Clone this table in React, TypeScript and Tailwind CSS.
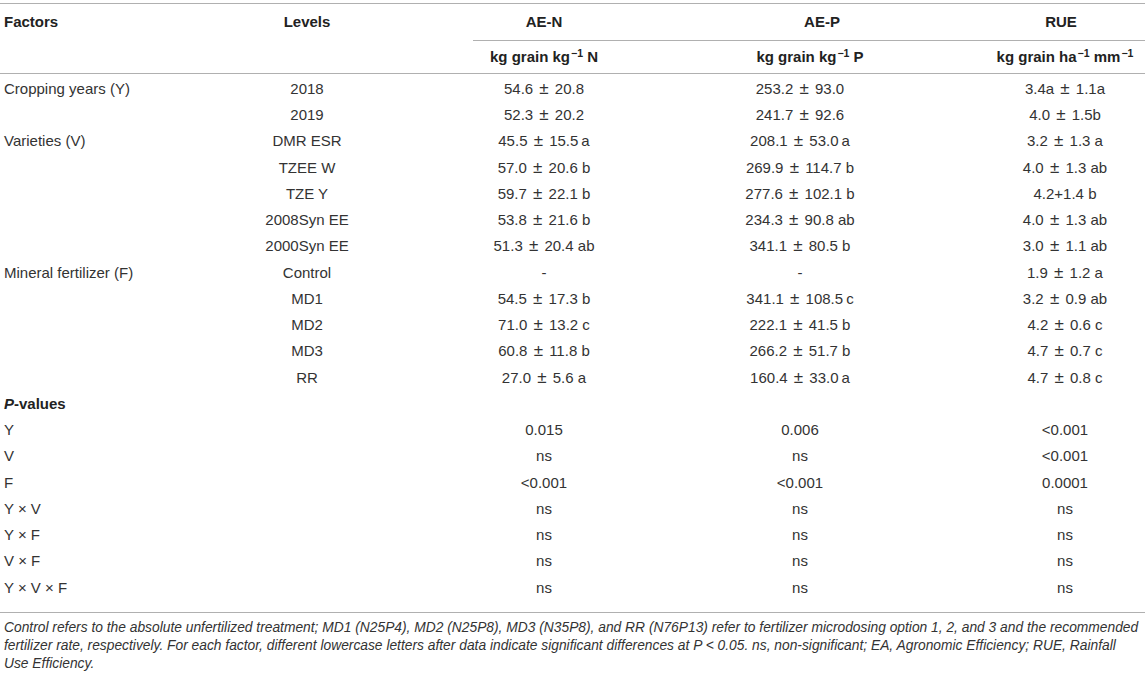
const COLS = 'grid grid-cols-[200px_214px_59px_142px_370px_160px]'

// The source sets ± a size larger than the figures around it.
function pm(a: string, b: string) {
  return (
    <span>
      {a} <span className="mx-[2px] text-[17px] leading-none">±</span> {b}
    </span>
  )
}

type Row = [string, string, React.ReactNode, React.ReactNode, React.ReactNode]

const DATA: Row[] = [
  ['Cropping years (Y)', '2018', pm('54.6', '20.8'), pm('253.2', '93.0'), pm('3.4a', '1.1a')],
  ['', '2019', pm('52.3', '20.2'), pm('241.7', '92.6'), pm('4.0', '1.5b')],
  ['Varieties (V)', 'DMR ESR', pm('45.5', '15.5\u2009a'), pm('208.1', '53.0\u2009a'), pm('3.2', '1.3 a')],
  ['', 'TZEE W', pm('57.0', '20.6 b'), pm('269.9', '114.7 b'), pm('4.0', '1.3 ab')],
  ['', 'TZE Y', pm('59.7', '22.1 b'), pm('277.6', '102.1 b'), '4.2+1.4 b'],
  ['', '2008Syn EE', pm('53.8', '21.6 b'), pm('234.3', '90.8 ab'), pm('4.0', '1.3 ab')],
  ['', '2000Syn EE', pm('51.3', '20.4 ab'), pm('341.1', '80.5 b'), pm('3.0', '1.1 ab')],
  ['Mineral fertilizer (F)', 'Control', '-', '-', pm('1.9', '1.2 a')],
  ['', 'MD1', pm('54.5', '17.3 b'), pm('341.1', '108.5\u2009c'), pm('3.2', '0.9 ab')],
  ['', 'MD2', pm('71.0', '13.2 c'), pm('222.1', '41.5 b'), pm('4.2', '0.6 c')],
  ['', 'MD3', pm('60.8', '11.8 b'), pm('266.2', '51.7 b'), pm('4.7', '0.7 c')],
  ['', 'RR', pm('27.0', '5.6 a'), pm('160.4', '33.0\u2009a'), pm('4.7', '0.8 c')],
]

const PVALUES: Row[] = [
  ['Y', '', '0.015', '0.006', '<0.001'],
  ['V', '', 'ns', 'ns', '<0.001'],
  ['F', '', '<0.001', '<0.001', '0.0001'],
  ['Y × V', '', 'ns', 'ns', 'ns'],
  ['Y × F', '', 'ns', 'ns', 'ns'],
  ['V × F', '', 'ns', 'ns', 'ns'],
  ['Y × V × F', '', 'ns', 'ns', 'ns'],
]

function Cell({ children, className = '' }: { children?: React.ReactNode; className?: string }) {
  return <div className={`flex items-center justify-center whitespace-nowrap ${className}`}>{children}</div>
}

function DataRow({ row }: { row: Row }) {
  return (
    <div className={`${COLS} h-[26.25px] items-center`}>
      <div className="whitespace-nowrap pl-1">{row[0]}</div>
      <Cell>{row[1]}</Cell>
      <div />
      <Cell>{row[2]}</Cell>
      <Cell>{row[3]}</Cell>
      <Cell>{row[4]}</Cell>
    </div>
  )
}

function Sup({ children }: { children: React.ReactNode }) {
  return <sup className="ml-px text-[10.5px]">{children}</sup>
}

export default function App() {
  return (
    <div className="h-[679px] w-[1145px] overflow-hidden bg-white pt-[3px] font-['Liberation_Sans',Arial,sans-serif] text-[15px] text-[#333]">
      <div className="h-px bg-[#b0b0b0]" />

      {/* Column titles */}
      <div className={`${COLS} h-[36px] items-center font-bold text-[#222]`}>
        <div className="pl-1">Factors</div>
        <Cell>Levels</Cell>
        <div />
        <Cell>AE-N</Cell>
        <Cell className="pl-[44px]">AE-P</Cell>
        <Cell className="pr-[8px]">RUE</Cell>
      </div>
      <div className={COLS}>
        <div className="h-px bg-[#b0b0b0] [grid-column:4/7]" />
      </div>

      {/* Units */}
      <div className={`${COLS} h-[32px] items-center font-bold text-[#222]`}>
        <div />
        <div />
        <div />
        <Cell>
          <span>
            kg grain kg<Sup>−1</Sup> N
          </span>
        </Cell>
        <Cell className="pl-[20px]">
          <span>
            kg grain kg<Sup>−1</Sup> P
          </span>
        </Cell>
        <Cell>
          <span>
            kg grain ha<Sup>−1</Sup> mm<Sup>−1</Sup>
          </span>
        </Cell>
      </div>
      <div className="h-px bg-[#b0b0b0]" />

      <div className="pb-[11px] pt-[2px]">
        {DATA.map((row, i) => (
          <DataRow key={i} row={row} />
        ))}
        <div className="flex h-[26.25px] items-center pl-1 font-bold text-[#222]">
          <span>
            <i>P</i>-values
          </span>
        </div>
        {PVALUES.map((row, i) => (
          <DataRow key={i} row={row} />
        ))}
      </div>
      <div className="h-px bg-[#b0b0b0]" />

      {/* Footnote */}
      <div className="pl-1 pt-[6px] text-[13.8px] italic leading-[18px] text-[#333]">
        <div className="whitespace-nowrap">
          Control refers to the absolute unfertilized treatment; MD1 (N25P4), MD2 (N25P8), MD3 (N35P8), and RR (N76P13) refer to fertilizer microdosing option 1, 2, and 3 and the recommended
        </div>
        <div className="whitespace-nowrap">
          fertilizer rate, respectively. For each factor, different lowercase letters after data indicate significant differences at P &lt; 0.05. ns, non-significant; EA, Agronomic Efficiency; RUE, Rainfall
        </div>
        <div>Use Efficiency.</div>
      </div>
    </div>
  )
}
